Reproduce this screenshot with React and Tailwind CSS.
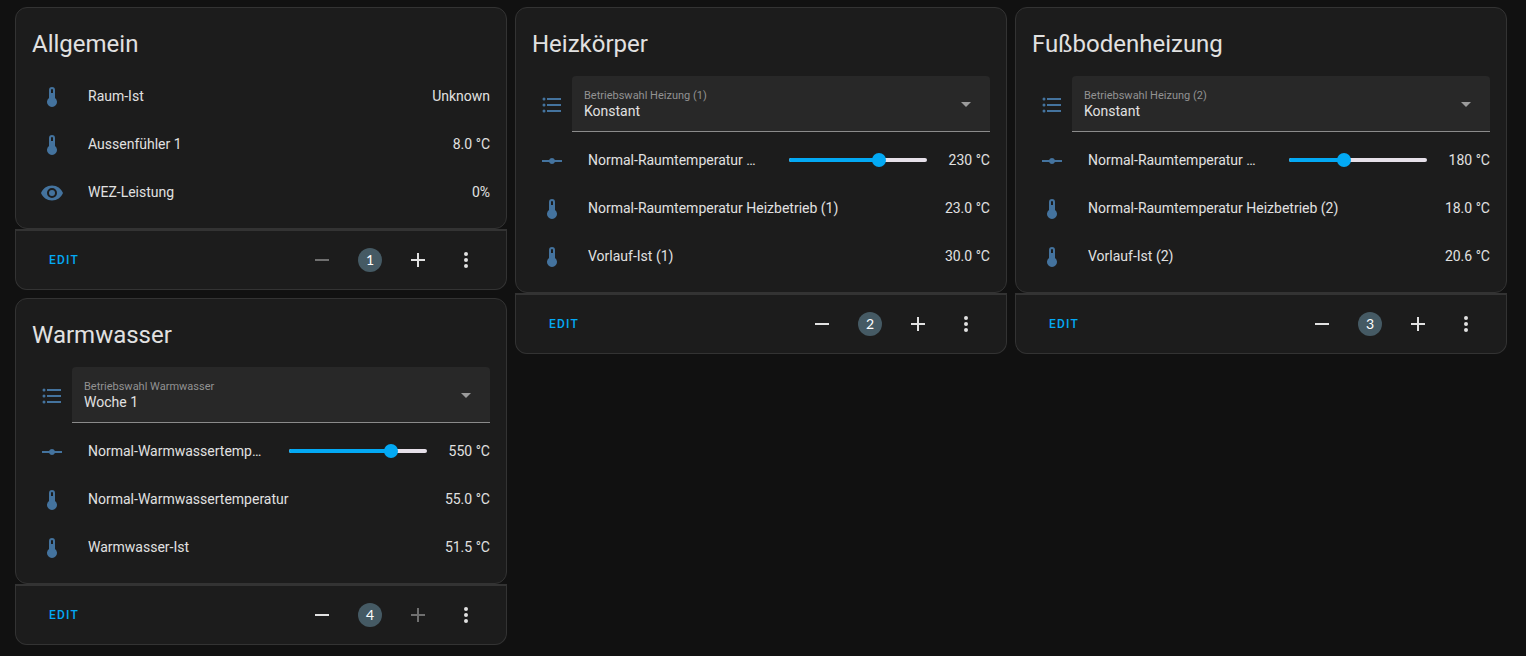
import { useId, useState } from "react";

const ICONS = {
  thermometer:
    "M15 13V5A3 3 0 0 0 9 5V13A5 5 0 1 0 15 13M12 4A1 1 0 0 1 13 5V8H11V5A1 1 0 0 1 12 4Z",
  eye: "M12,9A3,3 0 0,0 9,12A3,3 0 0,0 12,15A3,3 0 0,0 15,12A3,3 0 0,0 12,9M12,17A5,5 0 0,1 7,12A5,5 0 0,1 12,7A5,5 0 0,1 17,12A5,5 0 0,1 12,17M12,4.5C7,4.5 2.73,7.61 1,12C2.73,16.39 7,19.5 12,19.5C17,19.5 21.27,16.39 23,12C21.27,7.61 17,4.5 12,4.5Z",
  list: "M7,5H21V7H7V5M7,13V11H21V13H7M4,4.5A1.5,1.5 0 0,1 5.5,6A1.5,1.5 0 0,1 4,7.5A1.5,1.5 0 0,1 2.5,6A1.5,1.5 0 0,1 4,4.5M4,10.5A1.5,1.5 0 0,1 5.5,12A1.5,1.5 0 0,1 4,13.5A1.5,1.5 0 0,1 2.5,12A1.5,1.5 0 0,1 4,10.5M7,19V17H21V19H7M4,16.5A1.5,1.5 0 0,1 5.5,18A1.5,1.5 0 0,1 4,19.5A1.5,1.5 0 0,1 2.5,18A1.5,1.5 0 0,1 4,16.5Z",
  vertex:
    "M2,11H9.17C9.58,9.83 10.69,9 12,9C13.31,9 14.42,9.83 14.83,11H22V13H14.83C14.42,14.17 13.31,15 12,15C10.69,15 9.58,14.17 9.17,13H2V11Z",
  minus: "M19,13H5V11H19V13Z",
  plus: "M19,13H13V19H11V13H5V11H11V5H13V11H19V13Z",
  dots: "M12,16A2,2 0 0,1 14,18A2,2 0 0,1 12,20A2,2 0 0,1 10,18A2,2 0 0,1 12,16M12,10A2,2 0 0,1 14,12A2,2 0 0,1 12,14A2,2 0 0,1 10,12A2,2 0 0,1 12,10M12,4A2,2 0 0,1 14,6A2,2 0 0,1 12,8A2,2 0 0,1 10,6A2,2 0 0,1 12,4Z",
  arrow: "M7 10L12 15L17 10Z",
};

const COLUMNS = [
  [
    {
      title: "Allgemein",
      position: 1,
      rows: [
        { icon: "thermometer", name: "Raum-Ist", value: "Unknown" },
        { icon: "thermometer", name: "Aussenfühler 1", value: "8.0 °C" },
        { icon: "eye", name: "WEZ-Leistung", value: "0%" },
      ],
    },
    {
      title: "Warmwasser",
      position: 4,
      rows: [
        {
          type: "select",
          name: "Betriebswahl Warmwasser",
          value: "Woche 1",
          options: ["Woche 1", "Konstant"],
        },
        { type: "slider", name: "Normal-Warmwassertemperatur", value: 550, min: 180, max: 680 },
        { icon: "thermometer", name: "Normal-Warmwassertemperatur", value: "55.0 °C" },
        { icon: "thermometer", name: "Warmwasser-Ist", value: "51.5 °C" },
      ],
    },
  ],
  [
    {
      title: "Heizkörper",
      position: 2,
      rows: [
        {
          type: "select",
          name: "Betriebswahl Heizung (1)",
          value: "Konstant",
          options: ["Konstant", "Woche 1"],
        },
        {
          type: "slider",
          name: "Normal-Raumtemperatur Heizbetrieb (1)",
          value: 230,
          min: 100,
          max: 300,
        },
        { icon: "thermometer", name: "Normal-Raumtemperatur Heizbetrieb (1)", value: "23.0 °C" },
        { icon: "thermometer", name: "Vorlauf-Ist (1)", value: "30.0 °C" },
      ],
    },
  ],
  [
    {
      title: "Fußbodenheizung",
      position: 3,
      rows: [
        {
          type: "select",
          name: "Betriebswahl Heizung (2)",
          value: "Konstant",
          options: ["Konstant", "Woche 1"],
        },
        {
          type: "slider",
          name: "Normal-Raumtemperatur Heizbetrieb (2)",
          value: 180,
          min: 100,
          max: 300,
        },
        { icon: "thermometer", name: "Normal-Raumtemperatur Heizbetrieb (2)", value: "18.0 °C" },
        { icon: "thermometer", name: "Vorlauf-Ist (2)", value: "20.6 °C" },
      ],
    },
  ],
];

const LAST_POSITION = 4;

function Icon({ name }) {
  return (
    <svg viewBox="0 0 24 24" className="size-6 shrink-0 fill-current" aria-hidden="true">
      <path d={ICONS[name]} />
    </svg>
  );
}

function StateIcon({ name }) {
  return (
    <span className="flex h-10 w-10 shrink-0 items-center justify-center pt-0.5 text-[#44739e]">
      <Icon name={name} />
    </span>
  );
}

function StateRow({ icon, name, value }) {
  return (
    <div className="flex h-10 items-center">
      <StateIcon name={icon} />
      <span className="ml-4 min-w-0 flex-1 truncate">{name}</span>
      <span className="ml-4">{value}</span>
    </div>
  );
}

function SelectRow({ name, value, options }) {
  const id = useId();
  return (
    <div className="flex items-center">
      <StateIcon name="list" />
      <div className="grid h-14 min-w-0 flex-1 rounded-t border-b border-[#8b8b8b] bg-[#282828]">
        <label
          htmlFor={id}
          className="pointer-events-none z-10 self-start pt-3 pl-3 text-[11px] leading-4 text-[#929292] [grid-area:1/1]"
        >
          {name}
        </label>
        <select
          id={id}
          defaultValue={value}
          className="h-full w-full appearance-none bg-transparent pt-[15px] pr-10 pl-3 outline-none [grid-area:1/1]"
        >
          {options.map((option) => (
            <option key={option} className="bg-[#282828]">
              {option}
            </option>
          ))}
        </select>
        <span className="pointer-events-none mr-3 self-center justify-self-end text-[#9b9b9b] [grid-area:1/1]">
          <Icon name="arrow" />
        </span>
      </div>
    </div>
  );
}

function SliderRow({ name, value: initial, min, max }) {
  const id = useId();
  const [value, setValue] = useState(initial);
  const percent = ((value - min) / (max - min)) * 100;
  return (
    <div className="flex h-10 items-center">
      <StateIcon name="vertex" />
      <label htmlFor={id} className="ml-4 min-w-0 flex-1 truncate">
        {name}
      </label>
      <div className="ml-[18px] grid w-[152px] shrink-0 items-center">
        <div className="mx-[7px] h-1 overflow-hidden rounded-xs bg-[#e6e0e9] [grid-area:1/1]">
          <div className="h-full bg-[#03a9f4]" style={{ width: `${percent}%` }} />
        </div>
        <input
          id={id}
          type="range"
          min={min}
          max={max}
          value={value}
          onChange={(event) => setValue(Number(event.target.value))}
          className="z-10 h-[14px] w-full cursor-pointer appearance-none bg-transparent [grid-area:1/1] [&::-webkit-slider-thumb]:size-[14px] [&::-webkit-slider-thumb]:appearance-none [&::-webkit-slider-thumb]:rounded-full [&::-webkit-slider-thumb]:bg-[#03a9f4]"
        />
      </div>
      <output htmlFor={id} className="w-14 shrink-0 text-right">
        {value} °C
      </output>
    </div>
  );
}

function IconButton({ icon, label, disabled = false }) {
  return (
    <button
      type="button"
      aria-label={label}
      disabled={disabled}
      className="flex size-12 items-center justify-center rounded-full disabled:text-[#6f6f6f]"
    >
      <Icon name={icon} />
    </button>
  );
}

function Row(props) {
  if (props.type === "select") return <SelectRow {...props} />;
  if (props.type === "slider") return <SliderRow {...props} />;
  return <StateRow {...props} />;
}

function Card({ title, position, rows }) {
  return (
    <section>
      <div className="rounded-xl border border-[#333333] bg-[#1c1c1c] px-4 pb-4">
        <h2 className="pt-3 pb-2 text-2xl leading-[48px]">{title}</h2>
        <div className="flex flex-col gap-2">
          {rows.map((row, index) => (
            <Row key={index} {...row} />
          ))}
        </div>
      </div>
      <footer className="flex items-center rounded-b-xl border border-t-2 border-[#333333] bg-[#1c1c1c] px-4 py-[5px]">
        <button
          type="button"
          className="mr-auto h-9 px-[17px] text-xs font-medium tracking-widest text-[#03a9f4] uppercase"
        >
          Edit
        </button>
        <IconButton icon="minus" label="Decrease card position" disabled={position === 1} />
        <span className="flex size-12 items-center justify-center">
          <span className="flex size-6 items-center justify-center rounded-full bg-[#455a64] font-['Lato',sans-serif] text-white">
            {position}
          </span>
        </span>
        <IconButton
          icon="plus"
          label="Increase card position"
          disabled={position === LAST_POSITION}
        />
        <IconButton icon="dots" label="More options" />
      </footer>
    </section>
  );
}

export default function App() {
  return (
    <main className="grid min-h-screen grid-cols-3 items-start gap-2 bg-[#111111] pt-[7px] pr-[19px] pb-2 pl-[15px] font-['Roboto',sans-serif] text-sm text-[#e1e1e1]">
      {COLUMNS.map((cards, index) => (
        <div key={index} className="flex min-w-0 flex-col gap-2">
          {cards.map((card) => (
            <Card key={card.title} {...card} />
          ))}
        </div>
      ))}
    </main>
  );
}
